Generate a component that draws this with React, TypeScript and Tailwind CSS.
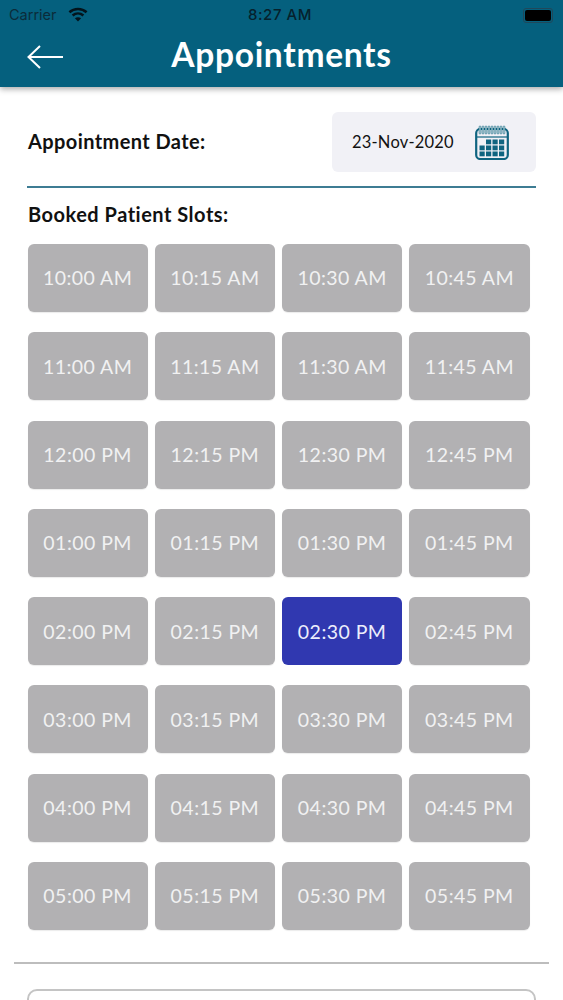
const hours = ["10", "11", "12", "01", "02", "03", "04", "05"];
const minutes = ["00", "15", "30", "45"];

function period(hour: string) {
  return hour === "10" || hour === "11" ? "AM" : "PM";
}

function WifiIcon() {
  return (
    <svg width="20" height="15" viewBox="0 0 20 15" fill="none" className="-mt-[2px]">
      <path d="M1.4 5.2C6.2.9 13.8.9 18.6 5.2" stroke="#03141c" strokeWidth="2.5" />
      <path d="M4.6 8.5c3.2-2.8 7.6-2.8 10.8 0" stroke="#03141c" strokeWidth="2.5" />
      <path d="M10 14.6 6.9 11.3c1.8-1.4 4.4-1.4 6.2 0z" fill="#03141c" />
    </svg>
  );
}

function CalendarIcon() {
  return (
    <svg width="34" height="35" viewBox="0 0 34 35" fill="none">
      <rect x="1.2" y="4" width="31.6" height="30" rx="4" stroke="#0f6480" strokeWidth="2.2" />
      <path d="M2 12h30" stroke="#0f6480" strokeWidth="1.2" />
      {[5, 8, 11, 14, 17, 20, 23, 26, 29].map((x) => (
        <rect key={x} x={x - 0.8} y="1" width="1.6" height="8" rx="0.8" fill="#fff" stroke="#0f6480" strokeWidth="0.7" />
      ))}
      {[0, 1, 2].map((r) =>
        [0, 1, 2, 3].map((c) =>
          r === 0 && c === 0 ? null : (
            <rect key={`${r}-${c}`} x={4.5 + c * 6.5} y={14.5 + r * 6} width="5.2" height="4.8" fill="#0f6480" />
          ),
        ),
      )}
    </svg>
  );
}

function Slot({ label, active }: { label: string; active?: boolean }) {
  return (
    <div
      className={
        active
          ? "flex h-[68px] items-center justify-center rounded-[6px] bg-[#3038b0] text-[19.5px] tracking-[0.45px] text-[#eceefc]"
          : "flex h-[68px] items-center justify-center rounded-[6px] bg-[#b2b1b3] text-[19.5px] tracking-[0.45px] text-[#f1f1f2] shadow-[0_1px_1px_rgba(0,0,0,0.08)]"
      }
    >
      {label}
    </div>
  );
}

export default function App() {
  return (
    <div className="h-[1000px] w-[563px] overflow-hidden bg-white font-['Lato',sans-serif] text-[#111]">
      <header className="relative h-[87px] bg-[#05607e] shadow-[0_2px_6px_rgba(0,0,0,0.35)]">
        <div className="relative flex h-[30px] items-center justify-between pl-[9px] pr-[10px] font-['Inter',sans-serif] text-[#06212c]">
          <div className="flex items-center gap-[11px] text-[14.5px] text-[#0b2c3a]">
            <span>Carrier</span>
            <WifiIcon />
          </div>
          <span className="absolute left-[248px] text-[15px] font-medium tracking-[0.55px]">8:27 AM</span>
          <div className="flex h-[15px] w-[30px] items-center justify-center rounded-[3px] border border-[#20485a]">
            <div className="h-[11px] w-[26px] rounded-[2px] bg-black" />
          </div>
        </div>
        <div className="flex h-[52px] items-center justify-center">
          <svg className="absolute left-[27px] top-[45px]" width="37" height="24" viewBox="0 0 37 24" fill="none">
            <path d="M36 12H2M13 1 1.5 12 13 23" stroke="#fff" strokeWidth="2" />
          </svg>
          <h1 className="-mt-[4px] text-[33.5px] font-bold tracking-[0.7px] text-white">Appointments</h1>
        </div>
      </header>

      <main className="px-[27px]">
        <div className="flex items-center justify-between border-b-2 border-[#3d7c93] pb-[14px] pt-[25px]">
          <span className="-mt-[3px] pl-[1px] text-[20px] font-bold tracking-[0.4px]">Appointment Date:</span>
          <div className="flex h-[60px] w-[204px] items-center rounded-[6px] bg-[#f1f1f6] pl-[20px] pr-[27px]">
            <span className="flex-1 text-[16.5px] tracking-[0.2px]">23-Nov-2020</span>
            <CalendarIcon />
          </div>
        </div>

        <h2 className="mt-[13px] pl-[1px] text-[20px] font-bold leading-[26px] tracking-[0.5px]">Booked Patient Slots:</h2>

        <div className="ml-[0.5px] mt-[17px] grid w-[502px] grid-cols-4 gap-x-[7px] gap-y-[20.3px]">
          {hours.flatMap((hour) =>
            minutes.map((minute) => (
              <Slot
                key={hour + minute}
                label={`${hour}:${minute} ${period(hour)}`}
                active={hour === "02" && minute === "30"}
              />
            )),
          )}
        </div>
      </main>

      <div className="mx-[14px] mt-[32px] border-t-2 border-[#bdbdbd]" />
      <div className="mx-[27px] mt-[25px] h-[40px] rounded-[10px] border-2 border-[#c4c4c4]" />
    </div>
  );
}
